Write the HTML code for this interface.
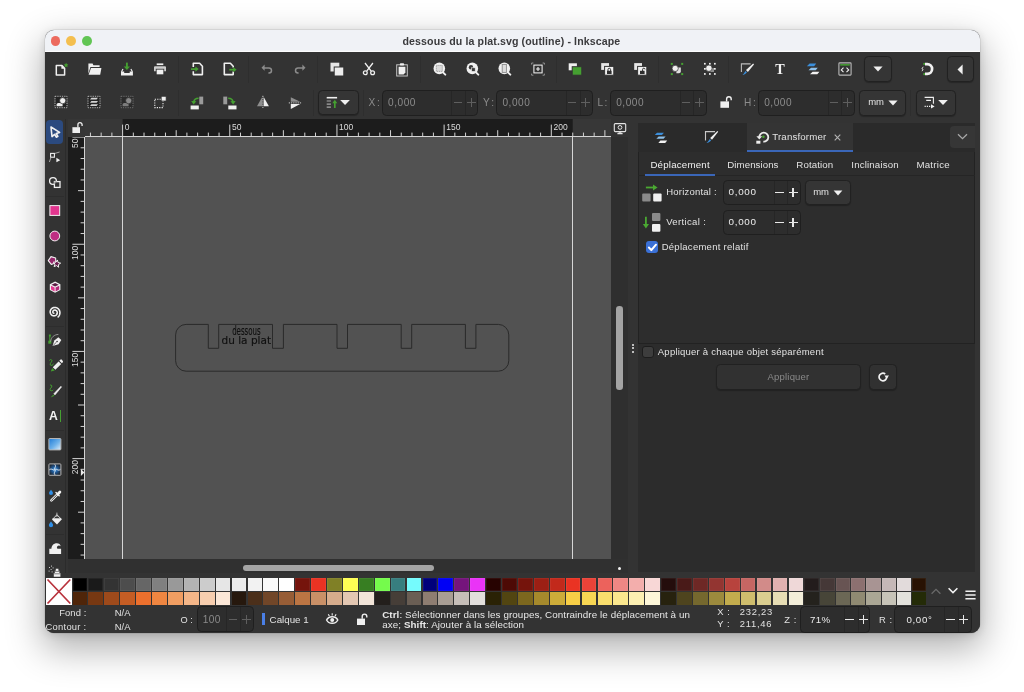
<!DOCTYPE html>
<html lang="fr">
<head>
<meta charset="utf-8">
<title>dessous du la plat.svg (outline) - Inkscape</title>
<style>
html,body{margin:0;padding:0}
body{width:1024px;height:692px;background:#fff;position:relative;overflow:hidden;font-family:"Liberation Sans",sans-serif;color:#e6e6e6}
#win{position:absolute;left:44.5px;top:30px;width:935px;height:603px;border-radius:9px;overflow:hidden;background:#333;
 box-shadow:0 0 0 .5px rgba(0,0,0,.13),0 14px 36px 3px rgba(0,0,0,.30),0 2px 8px rgba(0,0,0,.12)}
#o{position:absolute;left:-44.5px;top:-30px;width:1024px;height:692px;will-change:transform}
#o *{position:absolute;box-sizing:border-box}
#o svg *{position:static}
#o .t b{position:static}
.abs{position:absolute}
#title{left:44px;top:30px;width:936px;height:22.4px;background:#f0f2f6;border-bottom:1px solid #fcfcfd}
#title b{left:-.6px;width:100%;top:4.5px;text-align:center;font-size:10.6px;font-weight:bold;color:#3b3b3d;letter-spacing:.11px}
.dot{width:9.8px;height:9.8px;border-radius:50%;top:6.1px}
.sep{width:1px;background:#2e2e2e}
.btn{background:#353535;border:1px solid #212121;border-radius:4.5px;box-shadow:0 1px 1px rgba(0,0,0,.25)}
.inp{background:#2d2d2d;border:1px solid #1f1f1f;border-radius:4.5px}
.inp u{top:0;bottom:0;width:1px;background:#262626;text-decoration:none}
.lbl{font-size:10.1px;color:#8c8c8c;white-space:nowrap;line-height:12px}
.val{font-size:10.1px;color:#8b8b8b;white-space:nowrap;line-height:12px}
.pm{color:#5c5c5c}
.hl{background:#5f5f5f;height:1.2px}
.vl{background:#5f5f5f;width:1.2px}
.hlw{background:#e8e8e8;height:1.4px}
.vlw{background:#e8e8e8;width:1.4px}
#pal i{display:block}
.t{white-space:nowrap;color:#e2e2e2}
</style>
</head>
<body>
<div id="win"><div id="o">

<!-- title bar -->
<div id="title">
 <span class="dot" style="left:6.6px;background:#ec6a5e"></span>
 <span class="dot" style="left:22.4px;background:#f4bf4f"></span>
 <span class="dot" style="left:38.3px;background:#61c554"></span>
 <b>dessous du la plat.svg (outline) - Inkscape</b>
</div>

<!-- toolbars background -->
<div style="left:44px;top:52.4px;width:936px;height:67px;background:#333"></div>
<div class="sep" style="left:178.1px;top:56px;height:26.5px"></div>
<div class="sep" style="left:247.9px;top:56px;height:26.5px"></div>
<div class="sep" style="left:317.2px;top:56px;height:26.5px"></div>
<div class="sep" style="left:420.3px;top:56px;height:26.5px"></div>
<div class="sep" style="left:555.7px;top:56px;height:26.5px"></div>
<div class="sep" style="left:658.2px;top:56px;height:26.5px"></div>
<div class="sep" style="left:728.1px;top:56px;height:26.5px"></div>
<svg class="abs" style="left:53.0px;top:62.0px" width="16" height="16" viewBox="0 0 16 16"><path d="M3.3 3.6 H9 L11.6 6.2 V12.9 H3.3Z" fill="none" stroke="#f0f0f0" stroke-width="1.5" stroke-linejoin="round"/><path d="M6.2 4.4 V8.9 H10.8" fill="none" stroke="#2a2a2a" stroke-width="0"/><path d="M8.4 3.6 V6.8 H11.6Z" fill="#f0f0f0"/><polygon points="13.10,0.80 13.86,2.15 15.38,2.46 14.34,3.60 14.51,5.14 13.10,4.50 11.69,5.14 11.86,3.60 10.82,2.46 12.34,2.15" fill="#45a031"/></svg>
<svg class="abs" style="left:86.6px;top:61.2px" width="16" height="16" viewBox="0 0 16 16"><path d="M1.4 2.4 H5.6 L6.4 4.3 H12.6 V6 H3.4 L1.4 12.8Z" fill="#f0f0f0"/><path d="M4 7 H14.4 L13.2 13.8 H1.6Z" fill="#f0f0f0"/></svg>
<svg class="abs" style="left:119.3px;top:61.2px" width="16" height="16" viewBox="0 0 16 16"><path d="M7.9 1.6 V6.4" stroke="#45a031" stroke-width="1.9"/><path d="M4.9 5.4 H10.9 L7.9 8.9Z" fill="#45a031"/><path d="M2 10.6 H5.2 V11.9 H10.7 V10.6 H13.9 V14.6 H2Z" fill="#f0f0f0"/><path d="M2.5 10.8 L4 8 M13.4 10.8 L11.9 8" stroke="#f0f0f0" stroke-width="1.1" fill="none"/></svg>
<svg class="abs" style="left:151.9px;top:60.8px" width="16" height="16" viewBox="0 0 16 16"><rect x="4.7" y="2.4" width="6.6" height="1.7" fill="#f0f0f0"/><path d="M3 5.3 H13 A1 1 0 0 1 14 6.3 V10.2 H2 V6.3 A1 1 0 0 1 3 5.3Z" fill="#cdcdcd"/><rect x="4.2" y="8.2" width="7.6" height="5.6" fill="#f0f0f0" stroke="#333" stroke-width=".8"/></svg>
<svg class="abs" style="left:189.2px;top:61.0px" width="16" height="16" viewBox="0 0 16 16"><path d="M4.3 6 V2.3 H10.6 L13.4 5.2 V13.6 H4.3 V10.2" fill="none" stroke="#f0f0f0" stroke-width="1.6" stroke-linejoin="round"/><path d="M2 8.1 H7" stroke="#45a031" stroke-width="1.7"/><path d="M6.4 5.5 L9.7 8.1 L6.4 10.7Z" fill="#45a031"/></svg>
<svg class="abs" style="left:221.6px;top:61.0px" width="16" height="16" viewBox="0 0 16 16"><path d="M11.2 10.6 V13.6 H2.3 V2.3 H8.4 L11.2 5.2 V6.4" fill="none" stroke="#f0f0f0" stroke-width="1.6" stroke-linejoin="round"/><path d="M7.3 8.7 H12" stroke="#45a031" stroke-width="1.7"/><path d="M11.3 6.1 L14.6 8.7 L11.3 11.3Z" fill="#45a031"/></svg>
<svg class="abs" style="left:259.0px;top:60.3px" width="16" height="16" viewBox="0 0 16 16"><path d="M4.6 7.9 H10 A2.5 2.5 0 0 1 12.5 10.4 A2.5 2.5 0 0 1 10 12.9 H9.4" fill="none" stroke="#8c8c8c" stroke-width="1.5"/><path d="M5.6 4.5 L2.5 7.7 L5.6 10.8Z" fill="#8c8c8c"/></svg>
<svg class="abs" style="left:292.1px;top:60.3px" width="16" height="16" viewBox="0 0 16 16"><g transform="translate(16,0) scale(-1,1)"><path d="M4.6 7.9 H10 A2.5 2.5 0 0 1 12.5 10.4 A2.5 2.5 0 0 1 10 12.9 H9.4" fill="none" stroke="#8c8c8c" stroke-width="1.5"/><path d="M5.6 4.5 L2.5 7.7 L5.6 10.8Z" fill="#8c8c8c"/></g></svg>
<svg class="abs" style="left:329.2px;top:61.1px" width="16" height="16" viewBox="0 0 16 16"><rect x="1.5" y="1.7" width="8.8" height="8.8" fill="#e6e6e6"/><rect x="5.2" y="6" width="9.6" height="9" fill="#ededed" stroke="#333" stroke-width="1"/></svg>
<svg class="abs" style="left:361.4px;top:61.0px" width="16" height="16" viewBox="0 0 16 16"><path d="M4 2 L10.2 10.2 M11.9 2 L5.7 10.2" stroke="#f0f0f0" stroke-width="1.3" fill="none"/><circle cx="4.3" cy="11.7" r="1.9" fill="none" stroke="#f0f0f0" stroke-width="1.3"/><circle cx="11.6" cy="11.7" r="1.9" fill="none" stroke="#f0f0f0" stroke-width="1.3"/></svg>
<svg class="abs" style="left:393.5px;top:61.6px" width="16" height="16" viewBox="0 0 16 16"><rect x="2.7" y="2.8" width="10.6" height="11.2" fill="none" stroke="#c4c4c4" stroke-width="1"/><rect x="5.9" y="1.2" width="4.2" height="2.4" rx=".8" fill="#f0f0f0"/><path d="M4.6 4.8 H11.4 V10.6 L9.6 12.4 H4.6Z" fill="#f0f0f0"/></svg>
<svg class="abs" style="left:431.8px;top:60.9px" width="16" height="16" viewBox="0 0 16 16"><path d="M11 11.4 L13.3 13.6" stroke="#f0f0f0" stroke-width="2" stroke-linecap="round"/><circle cx="7.3" cy="7.4" r="5.8" fill="#f0f0f0"/><rect x="4.3" y="4.4" width="6" height="6" fill="#d8d8d8" stroke="#8a8a8a" stroke-width=".8" stroke-dasharray="1.2 .8"/></svg>
<svg class="abs" style="left:464.6px;top:60.9px" width="16" height="16" viewBox="0 0 16 16"><path d="M11 11.4 L13.3 13.6" stroke="#f0f0f0" stroke-width="2" stroke-linecap="round"/><circle cx="7.3" cy="7.4" r="5.8" fill="#f0f0f0"/><circle cx="6" cy="6.2" r="2.2" fill="#3a3a3a"/><rect x="6.6" y="6.8" width="3.6" height="3.6" fill="#3a3a3a" stroke="#f0f0f0" stroke-width=".6"/></svg>
<svg class="abs" style="left:497.1px;top:60.9px" width="16" height="16" viewBox="0 0 16 16"><path d="M11 11.4 L13.3 13.6" stroke="#f0f0f0" stroke-width="2" stroke-linecap="round"/><circle cx="7.3" cy="7.4" r="5.8" fill="#f0f0f0"/><rect x="5.2" y="3.4" width="4.2" height="8" fill="#dcdcdc" stroke="#8a8a8a" stroke-width=".9"/></svg>
<svg class="abs" style="left:529.8px;top:60.7px" width="16" height="16" viewBox="0 0 16 16"><rect x="3.9" y="4.1" width="8.2" height="7.8" fill="none" stroke="#f0f0f0" stroke-width="1.05"/><path d="M8 6.1 V9.9 M6.1 8 H9.9" stroke="#f0f0f0" stroke-width="1.1"/><path d="M1.6 3.6 V2 H3.4 M12.6 2 H14.4 V3.6 M14.4 12.6 V14.2 H12.6 M3.4 14.2 H1.6 V12.6" fill="none" stroke="#9a9a9a" stroke-width=".9"/></svg>
<svg class="abs" style="left:566.5px;top:61.2px" width="16" height="16" viewBox="0 0 16 16"><rect x="1.7" y="2.3" width="8.2" height="7" fill="#f0f0f0"/><rect x="5.2" y="5.7" width="9.6" height="8.5" fill="#45a031" stroke="#333" stroke-width="1"/></svg>
<svg class="abs" style="left:599.1px;top:61.2px" width="16" height="16" viewBox="0 0 16 16"><rect x="2.2" y="2.1" width="7.8" height="6.8" fill="#e6e6e6"/><rect x="5.6" y="5.4" width="9.2" height="8.8" fill="#f0f0f0" stroke="#333" stroke-width="1"/><rect x="8" y="9.8" width="4.6" height="3.2" fill="#2e2e2e"/><path d="M9 10 V8.6 A1.3 1.3 0 0 1 11.6 8.6 V10" fill="none" stroke="#2e2e2e" stroke-width="1"/></svg>
<svg class="abs" style="left:631.9px;top:61.2px" width="16" height="16" viewBox="0 0 16 16"><rect x="2.2" y="2.1" width="7.8" height="6.8" fill="#e6e6e6"/><rect x="5.6" y="5.4" width="9.2" height="8.8" fill="#f0f0f0" stroke="#333" stroke-width="1"/><rect x="8" y="9.8" width="4.6" height="3.2" fill="#2e2e2e"/><path d="M10.6 10 V8.4 A1.2 1.2 0 0 1 13 8.4" fill="none" stroke="#2e2e2e" stroke-width="1"/></svg>
<svg class="abs" style="left:669.4px;top:61.0px" width="16" height="16" viewBox="0 0 16 16"><path d="M7.4 6.6 H11.8 V10.4 A1.8 1.8 0 0 1 10 12.2 H7.4Z" fill="#e0e0e0"/><circle cx="6.2" cy="7.4" r="3.1" fill="#f0f0f0" stroke="#333" stroke-width=".7"/><rect x="1.8" y="1.9" width="2" height="2" fill="#45a031"/><rect x="12.2" y="1.9" width="2" height="2" fill="#45a031"/><rect x="1.8" y="12.1" width="2" height="2" fill="#45a031"/><rect x="12.2" y="12.1" width="2" height="2" fill="#45a031"/></svg>
<svg class="abs" style="left:701.9px;top:61.0px" width="16" height="16" viewBox="0 0 16 16"><path d="M8.4 7 H12 V11 H8.4Z" fill="#8e8e8e"/><circle cx="6.9" cy="7.2" r="3.2" fill="#f0f0f0" stroke="#333" stroke-width=".7"/><rect x="2.0" y="1.9" width="1.7" height="1.7" fill="#f0f0f0"/><rect x="7.0" y="1.9" width="1.7" height="1.7" fill="#f0f0f0"/><rect x="12.0" y="1.9" width="1.7" height="1.7" fill="#f0f0f0"/><rect x="2.0" y="7.0" width="1.7" height="1.7" fill="#f0f0f0"/><rect x="12.0" y="7.0" width="1.7" height="1.7" fill="#f0f0f0"/><rect x="2.0" y="12.1" width="1.7" height="1.7" fill="#f0f0f0"/><rect x="7.0" y="12.1" width="1.7" height="1.7" fill="#f0f0f0"/><rect x="12.0" y="12.1" width="1.7" height="1.7" fill="#f0f0f0"/></svg>
<svg class="abs" style="left:739.0px;top:61.0px" width="16" height="16" viewBox="0 0 16 16"><path d="M2.4 11 V2.9 H11.6" fill="none" stroke="#bdbdbd" stroke-width="1.1"/><path d="M14.2 2.6 L15 3.4 L8.9 10.9 L7 9Z" fill="#f0f0f0"/><path d="M6.6 9.9 L7.9 11.2 C7 12.8 5.4 13.6 3.4 13.9 C4.8 12.9 5.4 11.4 6.6 9.9Z" fill="#3b8fdc"/></svg>
<div class="t" style="left:770px;top:61.3px;width:20px;text-align:center;font-family:'Liberation Serif',serif;font-weight:bold;font-size:14.2px;line-height:16px;color:#f2f2f2">T</div>
<svg class="abs" style="left:804.6px;top:61.4px" width="16" height="16" viewBox="0 0 16 16"><path d="M4.6 2.6 H11.2 L9.1 5.3 H1.9Z" fill="#3b8fdc"/><path d="M6 6.8 H12.8 L10.7 9.2 H3.5Z" fill="#8fc1ea"/><path d="M7.6 10.8 H14.4 L12.3 13.3 H5Z" fill="#f2f2f2"/></svg>
<svg class="abs" style="left:837.3px;top:61.2px" width="16" height="16" viewBox="0 0 16 16"><rect x="1.9" y="1.9" width="12.2" height="12.2" rx=".8" fill="none" stroke="#b8b8b8" stroke-width="1.1"/><rect x="3.2" y="3.1" width="9.6" height="1.5" fill="#45a031"/><path d="M6.5 6.6 L4.3 8.9 L6.5 11.2 M9.5 6.6 L11.7 8.9 L9.5 11.2" fill="none" stroke="#f0f0f0" stroke-width="1.1"/></svg>
<div class="btn" style="left:863.8px;top:55.9px;width:28.2px;height:25.8px"></div>
<svg class="abs" style="left:872.6px;top:66px" width="10" height="6" viewBox="0 0 10 6"><path d="M0.4 0.5 H9.6 L5 5.5Z" fill="#f0f0f0"/></svg>
<svg class="abs" style="left:919.2px;top:61.2px" width="16" height="16" viewBox="0 0 16 16"><path d="M6 3.1 H8.2 A4.9 4.9 0 0 1 8.2 12.9 H6" fill="none" stroke="#f0f0f0" stroke-width="2.7"/><rect x="4.3" y="1.9" width="1.7" height="2" fill="#45a031"/><rect x="4.3" y="12.1" width="1.7" height="2" fill="#45a031"/><path d="M4.2 5.8 L2.9 7.8 L4.1 8.3 L3 10.2" fill="none" stroke="#e8e8e8" stroke-width=".9"/></svg>
<div class="btn" style="left:946.6px;top:55.9px;width:27.8px;height:25.8px"></div>
<svg class="abs" style="left:957.2px;top:63.6px" width="6" height="11" viewBox="0 0 6 11"><path d="M5.6 0.6 V10.4 L0.5 5.5Z" fill="#f0f0f0"/></svg>
<div class="sep" style="left:178.1px;top:89.5px;height:26px"></div>
<div class="sep" style="left:313.4px;top:89.5px;height:26px"></div>
<div class="sep" style="left:363.1px;top:89.5px;height:26px"></div>
<div class="sep" style="left:910.1px;top:89.5px;height:26px"></div>
<svg class="abs" style="left:53.4px;top:94.1px" width="16" height="16" viewBox="0 0 16 16"><rect x="2" y="2.3" width="12" height="11.4" fill="#242424" stroke="#c8c8c8" stroke-width=".85" stroke-dasharray="1.3 1"/><path d="M3.6 12.2 V10.6 A1.6 1.6 0 0 1 5.2 9 H9.6 V12.2Z" fill="#ececec"/><circle cx="9.7" cy="6.7" r="3.1" fill="#f0f0f0" stroke="#242424" stroke-width=".7"/></svg>
<svg class="abs" style="left:86.4px;top:94.1px" width="16" height="16" viewBox="0 0 16 16"><rect x="2" y="2.3" width="12" height="11.4" fill="#242424" stroke="#c8c8c8" stroke-width=".85" stroke-dasharray="1.3 1"/><path d="M5.4 3.8 H12 L10.6 5.6 H4Z M5.4 7 H12 L10.6 8.8 H4Z M5.4 10.2 H12 L10.6 12 H4Z" fill="#d2d2d2"/></svg>
<svg class="abs" style="left:118.8px;top:94.1px" width="16" height="16" viewBox="0 0 16 16"><rect x="2" y="2.3" width="12" height="11.4" fill="#2b2b2b" stroke="#7a7a7a" stroke-width=".85" stroke-dasharray="1.3 1"/><path d="M3.6 12.2 V10.6 A1.6 1.6 0 0 1 5.2 9 H9.6 V12.2Z" fill="#7c7c7c"/><circle cx="9.7" cy="6.7" r="3.1" fill="#8a8a8a" stroke="#2b2b2b" stroke-width=".7"/></svg>
<svg class="abs" style="left:152.0px;top:94.3px" width="16" height="16" viewBox="0 0 16 16"><rect x="2.8" y="5.2" width="8.2" height="8.4" fill="none" stroke="#f0f0f0" stroke-width="1.05" stroke-dasharray="1.2 1.2"/><rect x="9.2" y="2.3" width="4.9" height="4.7" fill="#f0f0f0" stroke="#333" stroke-width=".7"/></svg>
<svg class="abs" style="left:189.3px;top:94.5px" width="16" height="16" viewBox="0 0 16 16"><rect x="10.3" y="1.6" width="3.9" height="7.7" fill="#9a9a9a"/><rect x="1.6" y="10.5" width="8.2" height="3.9" fill="#f0f0f0"/><path d="M9.6 3.2 C6.8 3.2 5 4.6 4.8 7" fill="none" stroke="#45a031" stroke-width="1.6"/><path d="M2.2 5.9 L7.4 6.3 L4.6 9.4Z" fill="#45a031"/></svg>
<svg class="abs" style="left:221.8px;top:94.5px" width="16" height="16" viewBox="0 0 16 16"><rect x="1.3" y="1.6" width="3.9" height="7.7" fill="#9a9a9a"/><rect x="6.3" y="10.5" width="8.2" height="3.9" fill="#f0f0f0"/><path d="M6.2 3.2 C9 3.2 10.8 4.6 11 7" fill="none" stroke="#45a031" stroke-width="1.6"/><path d="M13.6 5.9 L8.4 6.3 L11.2 9.4Z" fill="#45a031"/></svg>
<svg class="abs" style="left:255.0px;top:94.3px" width="16" height="16" viewBox="0 0 16 16"><path d="M7.2 3 V12.2 H2Z" fill="#8e8e8e"/><path d="M8.7 3 V12.2 H13.9Z" fill="#f0f0f0"/><path d="M7.9 1.8 V14" stroke="#e0e0e0" stroke-width=".9" stroke-dasharray="1.3 .9"/></svg>
<svg class="abs" style="left:287.2px;top:94.9px" width="16" height="16" viewBox="0 0 16 16"><path d="M3.8 2.2 L13.2 6.8 H3.8Z" fill="#8e8e8e"/><path d="M3.8 13.9 L13.2 8.9 H3.8Z" fill="#f0f0f0"/><path d="M1.8 7.9 H14.4" stroke="#e0e0e0" stroke-width=".9" stroke-dasharray="1.3 .9"/></svg>
<div class="btn" style="left:318.4px;top:89.6px;width:40.4px;height:25.8px"></div>
<svg class="abs" style="left:325px;top:95px" width="28" height="15" viewBox="325 95 28 15"><path d="M326.7 97.7 H337.1" stroke="#f0f0f0" stroke-width="1.6"/><path d="M326.7 101 H330.9 M326.7 104.1 H330.9 M326.7 107.2 H330.9" stroke="#a8a8a8" stroke-width="1.2"/><path d="M334.8 108 V102.4" stroke="#45a031" stroke-width="1.7"/><path d="M332.3 103.2 L334.8 99.8 L337.3 103.2Z" fill="#45a031"/><path d="M340.2 100 H349.9 L345.05 105Z" fill="#f0f0f0"/></svg>
<div class="lbl" style="left:368.4px;top:97.2px;letter-spacing:-.5px">X :</div><div class="inp" style="left:381.8px;top:89.5px;width:96.7px;height:26px"><u style="left:68.7px"></u><u style="left:82.4px"></u></div><div class="val" style="left:388.0px;top:97.1px;letter-spacing:.55px">0,000</div><div class="hl" style="left:453.5px;top:102px;width:8.6px"></div><div class="hl" style="left:467.0px;top:102px;width:8.8px"></div><div class="vl" style="left:470.9px;top:97.8px;height:9.2px"></div>
<div class="lbl" style="left:483px;top:97.2px;letter-spacing:-.5px">Y :</div><div class="inp" style="left:496.2px;top:89.5px;width:96.7px;height:26px"><u style="left:68.7px"></u><u style="left:82.4px"></u></div><div class="val" style="left:502.4px;top:97.1px;letter-spacing:.55px">0,000</div><div class="hl" style="left:567.9px;top:102px;width:8.6px"></div><div class="hl" style="left:581.4px;top:102px;width:8.8px"></div><div class="vl" style="left:585.3px;top:97.8px;height:9.2px"></div>
<div class="lbl" style="left:597.4px;top:97.2px;letter-spacing:-.5px">L :</div><div class="inp" style="left:610px;top:89.5px;width:96.7px;height:26px"><u style="left:68.7px"></u><u style="left:82.4px"></u></div><div class="val" style="left:616.2px;top:97.1px;letter-spacing:.55px">0,000</div><div class="hl" style="left:681.7px;top:102px;width:8.6px"></div><div class="hl" style="left:695.2px;top:102px;width:8.8px"></div><div class="vl" style="left:699.1px;top:97.8px;height:9.2px"></div>
<div class="lbl" style="left:743.9px;top:97.2px;letter-spacing:-.5px">H :</div><div class="inp" style="left:758px;top:89.5px;width:96.7px;height:26px"><u style="left:68.7px"></u><u style="left:82.4px"></u></div><div class="val" style="left:764.2px;top:97.1px;letter-spacing:.55px">0,000</div><div class="hl" style="left:829.7px;top:102px;width:8.6px"></div><div class="hl" style="left:843.2px;top:102px;width:8.8px"></div><div class="vl" style="left:847.1px;top:97.8px;height:9.2px"></div>
<svg class="abs" style="left:718.3px;top:94.3px" width="16" height="16" viewBox="0 0 16 16"><rect x="2.4" y="7.4" width="8.6" height="6.4" fill="#f0f0f0"/><path d="M8.6 7.6 V5 A2.3 2.3 0 0 1 13.2 5 V6.2" fill="none" stroke="#f0f0f0" stroke-width="1.4"/></svg>
<div class="btn" style="left:859.4px;top:89.5px;width:46.2px;height:26px"></div>
<div class="t" style="left:868.2px;top:96.1px;font-size:9.5px;line-height:12px">mm</div>
<svg class="abs" style="left:887.6px;top:99.8px" width="10" height="6" viewBox="0 0 10 6"><path d="M0.4 0.5 H9.6 L5 5.5Z" fill="#f0f0f0"/></svg>
<div class="btn" style="left:915.6px;top:89.5px;width:40px;height:26px"></div>
<svg class="abs" style="left:921px;top:95px" width="32" height="15" viewBox="921 95 32 15"><path d="M924.6 97.4 H933.4 V103.8 M926.2 100.4 H931" fill="none" stroke="#f0f0f0" stroke-width="1.1"/><path d="M924.6 106.4 H931.6" stroke="#f0f0f0" stroke-width="1.1" stroke-dasharray="1.2 1"/><path d="M931 104.2 L934.6 106.4 L931 108.6Z" fill="#f0f0f0"/><path d="M938.2 100 H947.8 L943 105Z" fill="#f0f0f0"/></svg>

<!-- toolbox -->
<div style="left:44px;top:119px;width:21.5px;height:459px;background:#333"></div>
<div class="sep" style="left:65px;top:119px;height:454px;background:#2b2b2b"></div>
<div style="left:46px;top:195.9px;width:18px;height:1px;background:#2d2d2d"></div>
<div style="left:46px;top:325.5px;width:18px;height:1px;background:#2d2d2d"></div>
<div style="left:46px;top:429.7px;width:18px;height:1px;background:#2d2d2d"></div>
<div style="left:46px;top:534.4px;width:18px;height:1px;background:#2d2d2d"></div>
<div style="left:46.1px;top:119.7px;width:17.3px;height:24px;border-radius:4px;background:#2b4a7f"></div>
<svg class="abs" style="left:44px;top:119px" width="22" height="459" viewBox="44 119 22 459"><path d="M51 127 L59.6 132.4 L56.2 133.5 L57.9 136.3 L56.3 137.2 L54.6 134.4 L52 136.6Z" fill="#2b4a7f" stroke="#f0f0f0" stroke-width="1.6" stroke-linejoin="round"/><rect x="50.6" y="153.4" width="3.8" height="3.8" fill="none" stroke="#f0f0f0" stroke-width="1.1"/><path d="M49.4 162 L50.9 157.6 M55 153.4 L59.6 152" stroke="#c0c0c0" stroke-width=".8" fill="none"/><path d="M56.4 157.8 L60.2 160.2 L56.4 162.2Z" fill="#f0f0f0"/><circle cx="53" cy="181" r="3.4" fill="none" stroke="#f0f0f0" stroke-width="1.3"/><rect x="54.4" y="181.6" width="5.6" height="5.8" fill="#333" stroke="#f0f0f0" stroke-width="1.3"/><path d="M54.4 184.4 L57 181.6 H54.4Z" fill="#8a8a8a"/><rect x="49.9" y="205.6" width="9.8" height="9.8" fill="#e2368f" stroke="#f0f0f0" stroke-width="1"/><circle cx="54.8" cy="236" r="4.9" fill="#bf2d83" stroke="#f0f0f0" stroke-width="1"/><polygon points="50.99,256.65 55.63,257.97 55.80,262.79 51.27,264.44 48.30,260.65" fill="#96286c" stroke="#f0f0f0" stroke-width="1.1" stroke-linejoin="round"/><polygon points="57.38,259.94 58.06,262.52 60.65,263.16 58.41,264.61 58.60,267.26 56.53,265.58 54.06,266.58 55.02,264.09 53.31,262.05 55.97,262.20" fill="#6a1c4e" stroke="#f0f0f0" stroke-width="1" stroke-linejoin="round"/><path d="M55.1 281.59999999999997 L60.4 284.3 V290.09999999999997 L55.1 292.8 L49.800000000000004 290.09999999999997 V284.3Z" fill="#f0f0f0"/><path d="M55.1 283.0 L58.7 284.8 L55.1 286.59999999999997 L51.5 284.8Z" fill="#5a1c44"/><path d="M51.0 285.8 L54.6 287.59999999999997 V291.5 L51.0 289.59999999999997Z" fill="#e2368f"/><path d="M59.2 285.8 L55.6 287.59999999999997 V291.5 L59.2 289.59999999999997Z" fill="#b02878"/><path d="M53.80 313.22 L53.67 313.18 L53.53 313.13 L53.41 313.05 L53.29 312.96 L53.17 312.85 L53.07 312.72 L52.99 312.57 L52.92 312.42 L52.86 312.24 L52.83 312.06 L52.82 311.87 L52.84 311.68 L52.88 311.48 L52.94 311.28 L53.03 311.09 L53.14 310.91 L53.28 310.73 L53.44 310.57 L53.63 310.43 L53.83 310.31 L54.06 310.21 L54.29 310.14 L54.54 310.09 L54.80 310.07 L55.07 310.09 L55.34 310.13 L55.60 310.21 L55.86 310.32 L56.11 310.47 L56.34 310.64 L56.56 310.85 L56.75 311.08 L56.92 311.34 L57.06 311.62 L57.17 311.92 L57.24 312.24 L57.28 312.57 L57.28 312.91 L57.24 313.25 L57.15 313.58 L57.03 313.92 L56.87 314.24 L56.67 314.54 L56.43 314.82 L56.15 315.07 L55.85 315.30 L55.51 315.49 L55.15 315.64 L54.77 315.76 L54.37 315.82 L53.96 315.85 L53.55 315.82 L53.14 315.75 L52.73 315.62 L52.34 315.45 L51.96 315.23 L51.61 314.97 L51.28 314.66 L50.99 314.32 L50.74 313.94 L50.53 313.52 L50.37 313.08 L50.26 312.62 L50.20 312.15 L50.20 311.66 L50.25 311.17 L50.36 310.69 L50.53 310.22 L50.75 309.76 L51.03 309.33 L51.36 308.93 L51.73 308.56 L52.15 308.24 L52.61 307.97 L53.10 307.74 L53.62 307.58 L54.16 307.47 L54.72 307.43 L55.28 307.45 L55.84 307.53 L56.39 307.69 L56.93 307.90 L57.45 308.18 L57.93 308.52 L58.37 308.91 L58.77 309.36 L59.12 309.86 L59.42 310.39 L59.65 310.97 L59.81 311.57 L59.91 312.19 L59.94 312.82 L59.89 313.46 L59.77 314.09 L59.57 314.71 L59.30 315.31 L58.97 315.88 L58.56 316.41 L58.10 316.90" fill="none" stroke="#f0f0f0" stroke-width="1.55" stroke-linecap="round"/><path d="M49.8 335.6 V342" stroke="#45a031" stroke-width="1"/><rect x="48.9" y="334.5" width="2" height="2" fill="#45a031"/><rect x="48.3" y="340.7" width="3" height="3" fill="#45a031"/><path d="M50.6 341.6 C51 337 54.5 334.6 58.4 334.4" fill="none" stroke="#a8a8a8" stroke-width=".8"/><path d="M52.6 346 L54.3 340.4 L58.4 337.3 L61.3 340 L58.6 344.2Z" fill="#f0f0f0"/><path d="M53.2 345.4 L56.6 342" stroke="#333" stroke-width=".7"/><circle cx="57.1" cy="341.5" r=".8" fill="#333"/><path d="M49.4 360.4 C50.4 359 52.4 359.6 51.8 361.2 C51 363 49.6 363.6 50.4 365 C51.2 366 53 365.2 53.6 363.6" fill="none" stroke="#45a031" stroke-width="1"/><path d="M52.8 367.2 L58.6 361.4 L61.2 364 L55.4 369.8Z" fill="#f0f0f0"/><path d="M59.3 360.7 L60.3 359.7 A1.2 1.2 0 0 1 62 359.9 L62.8 360.9 A1.2 1.2 0 0 1 62.8 362.3 L61.9 363.3Z" fill="#f0f0f0"/><path d="M52.2 367.9 L54.7 370.4 L50.8 371.6Z" fill="#45a031"/><path d="M50 385.2 C51.2 384.6 52.4 385.6 51.6 387 C50.8 388.4 49.4 389.2 50.4 390.4 C51.2 391.2 52.6 390.8 53.2 389.8" fill="none" stroke="#45a031" stroke-width="1"/><path d="M53.8 393.8 L60.9 386.2 L61.6 386.9 L55 394.9Z" fill="#f0f0f0" stroke="#f0f0f0" stroke-width=".5"/><path d="M53.3 394.4 L54.6 395.7 L50.6 397.4Z" fill="#45a031"/><defs><linearGradient id="gr" x1="0" y1="0" x2="1" y2="1"><stop offset="0" stop-color="#1d7ad6"/><stop offset=".55" stop-color="#6fb2ea"/><stop offset="1" stop-color="#e4f0fa"/></linearGradient><radialGradient id="ms" cx=".5" cy=".5" r=".55"><stop offset="0" stop-color="#3f9cf0"/><stop offset=".55" stop-color="#1d4f86"/><stop offset="1" stop-color="#20262e"/></radialGradient></defs><rect x="48.9" y="438.5" width="12" height="11.4" rx=".8" fill="url(#gr)" stroke="#b4b4b4" stroke-width="1"/><rect x="48.9" y="463.9" width="12" height="11.4" rx=".8" fill="url(#ms)" stroke="#b4b4b4" stroke-width="1"/><path d="M49.4 469.8 C52 467.6 53.6 471.4 54.9 469.6 C56.2 467.8 58 471.6 60.4 469.4 M54.8 464.4 C57 467 53.2 468.4 54.9 469.6 C56.6 470.8 52.8 472.6 55 474.8" fill="none" stroke="#f4f4f4" stroke-width=".9"/><path d="M51 489.7 C52 491.1 53 492.1 53 493.1 A2 2 0 0 1 49 493.1 C49 492.1 50 491.1 51 489.7Z" fill="#2f8ee6"/><path d="M51.4 500.4 L57.2 494.6" stroke="#f0f0f0" stroke-width="2.6" stroke-linecap="round"/><path d="M51.6 500.2 L56.6 495.2" stroke="#333" stroke-width=".9" stroke-linecap="round"/><path d="M56 492.6 L59.2 495.8" stroke="#f0f0f0" stroke-width="1.4" stroke-linecap="round"/><path d="M58 494 L59.9 492.1" stroke="#f0f0f0" stroke-width="2.8" stroke-linecap="round"/><path d="M51 521.5699999999999 C52.05 523.04 53.1 524.0899999999999 53.1 525.14 A2.1 2.1 0 0 1 48.9 525.14 C48.9 524.0899999999999 49.95 523.04 51 521.5699999999999Z" fill="#2f8ee6"/><path d="M56.9 514.2 L61.9 519.2 L57 524.4 L52 519.4Z" fill="#f0f0f0"/><path d="M53.2 518.9 L56.9 515.3 L60.6 518.9Z" fill="#333"/><path d="M52.6 518.7 H61.2" stroke="#f0f0f0" stroke-width=".9"/><path d="M56.9 512.6 V517" stroke="#cfcfcf" stroke-width=".8"/><path d="M49.3 553.9 V548.8 H51.4 C51.6 545.4 53.8 543.3 56.8 543.3 C59 543.3 60.4 544.6 60.6 546.2 C59.6 545.4 58.2 545.4 57.4 546.2 C56.6 547.1 56.8 548.4 57.8 548.8 H61.1 V553.9Z" fill="#f0f0f0"/><path d="M53.8 576.8 V573 H54.8 V570.8 H55.8 V568.8 H58.4 V570.8 H59.4 V573 H60.4 V576.8Z" fill="#f0f0f0"/><path d="M53.8 573.8 H60.4 M54.8 571.4 H59.4" stroke="#333" stroke-width=".6"/><g fill="#cfcfcf"><rect x="49" y="567" width="1" height="1"/><rect x="51" y="565.6" width="1" height="1"/><rect x="50.6" y="569" width="1" height="1"/><rect x="48.6" y="570.6" width="1" height="1"/><rect x="51.6" y="571.4" width="1" height="1"/><rect x="52.6" y="567.4" width="1" height="1"/></g></svg>
<div class="t" style="left:47.4px;top:409.2px;width:12px;text-align:center;font-weight:bold;font-size:12.2px;line-height:14px;color:#f2f2f2">A</div>
<div style="left:59.8px;top:409.7px;width:1.4px;height:12.8px;background:#45a031"></div>

<!-- ruler corner -->
<div style="left:68px;top:119px;width:17px;height:18px;background:#363636"></div>
<svg class="abs" style="left:69px;top:119px" width="16" height="18" viewBox="69 119 16 18"><rect x="72.4" y="127.2" width="7.6" height="5.8" fill="#f0f0f0"/><path d="M77.9 127.4 V124.8 A2.1 2.1 0 0 1 82.1 124.8 V126" fill="none" stroke="#f0f0f0" stroke-width="1.3"/></svg>
<!-- canvas -->
<div style="left:85px;top:137px;width:526px;height:422px;background:#525252"></div>
<div style="left:122.1px;top:137px;width:1px;height:422px;background:#d6d6d6"></div>
<div style="left:572.2px;top:137px;width:1px;height:422px;background:#d6d6d6"></div>
<svg class="abs" style="left:85px;top:119px" width="526" height="18" viewBox="85 119 526 18">
<rect x="85" y="119" width="526" height="18" fill="#373737"/>
<rect x="122.6" y="119" width="450.1" height="18" fill="#1c1c1c"/>
<g stroke="#d4d4d4" stroke-width="1">
<line x1="90.45" y1="132.6" x2="90.45" y2="137"/>
<line x1="101.16" y1="132.6" x2="101.16" y2="137"/>
<line x1="111.88" y1="132.6" x2="111.88" y2="137"/>
<line x1="122.60" y1="124.6" x2="122.60" y2="137"/>
<line x1="133.32" y1="132.6" x2="133.32" y2="137"/>
<line x1="144.03" y1="132.6" x2="144.03" y2="137"/>
<line x1="154.75" y1="132.6" x2="154.75" y2="137"/>
<line x1="165.47" y1="132.6" x2="165.47" y2="137"/>
<line x1="176.19" y1="130.2" x2="176.19" y2="137"/>
<line x1="186.90" y1="132.6" x2="186.90" y2="137"/>
<line x1="197.62" y1="132.6" x2="197.62" y2="137"/>
<line x1="208.34" y1="132.6" x2="208.34" y2="137"/>
<line x1="219.06" y1="132.6" x2="219.06" y2="137"/>
<line x1="229.77" y1="124.6" x2="229.77" y2="137"/>
<line x1="240.49" y1="132.6" x2="240.49" y2="137"/>
<line x1="251.21" y1="132.6" x2="251.21" y2="137"/>
<line x1="261.93" y1="132.6" x2="261.93" y2="137"/>
<line x1="272.64" y1="132.6" x2="272.64" y2="137"/>
<line x1="283.36" y1="130.2" x2="283.36" y2="137"/>
<line x1="294.08" y1="132.6" x2="294.08" y2="137"/>
<line x1="304.80" y1="132.6" x2="304.80" y2="137"/>
<line x1="315.51" y1="132.6" x2="315.51" y2="137"/>
<line x1="326.23" y1="132.6" x2="326.23" y2="137"/>
<line x1="336.95" y1="124.6" x2="336.95" y2="137"/>
<line x1="347.67" y1="132.6" x2="347.67" y2="137"/>
<line x1="358.38" y1="132.6" x2="358.38" y2="137"/>
<line x1="369.10" y1="132.6" x2="369.10" y2="137"/>
<line x1="379.82" y1="132.6" x2="379.82" y2="137"/>
<line x1="390.54" y1="130.2" x2="390.54" y2="137"/>
<line x1="401.25" y1="132.6" x2="401.25" y2="137"/>
<line x1="411.97" y1="132.6" x2="411.97" y2="137"/>
<line x1="422.69" y1="132.6" x2="422.69" y2="137"/>
<line x1="433.41" y1="132.6" x2="433.41" y2="137"/>
<line x1="444.12" y1="124.6" x2="444.12" y2="137"/>
<line x1="454.84" y1="132.6" x2="454.84" y2="137"/>
<line x1="465.56" y1="132.6" x2="465.56" y2="137"/>
<line x1="476.28" y1="132.6" x2="476.28" y2="137"/>
<line x1="487.00" y1="132.6" x2="487.00" y2="137"/>
<line x1="497.71" y1="130.2" x2="497.71" y2="137"/>
<line x1="508.43" y1="132.6" x2="508.43" y2="137"/>
<line x1="519.15" y1="132.6" x2="519.15" y2="137"/>
<line x1="529.87" y1="132.6" x2="529.87" y2="137"/>
<line x1="540.58" y1="132.6" x2="540.58" y2="137"/>
<line x1="551.30" y1="124.6" x2="551.30" y2="137"/>
<line x1="562.02" y1="132.6" x2="562.02" y2="137"/>
<line x1="572.74" y1="132.6" x2="572.74" y2="137"/>
<line x1="583.45" y1="132.6" x2="583.45" y2="137"/>
<line x1="594.17" y1="132.6" x2="594.17" y2="137"/>
<line x1="604.89" y1="130.2" x2="604.89" y2="137"/>
<line x1="85" y1="136.5" x2="611" y2="136.5"/>
</g>
<g fill="#dcdcdc" font-family="Liberation Sans, sans-serif" font-size="8.5">
<text x="124.8" y="130.2">0</text>
<text x="232.0" y="130.2">50</text>
<text x="339.1" y="130.2">100</text>
<text x="446.3" y="130.2">150</text>
<text x="553.5" y="130.2">200</text>
</g></svg>
<svg class="abs" style="left:68px;top:137px" width="17" height="422" viewBox="68 137 17 422">
<rect x="68" y="137" width="17" height="422" fill="#1c1c1c"/>
<g stroke="#d4d4d4" stroke-width="1">
<line x1="72.4" y1="137.07" x2="85" y2="137.07"/>
<line x1="80.6" y1="147.79" x2="85" y2="147.79"/>
<line x1="80.6" y1="158.51" x2="85" y2="158.51"/>
<line x1="80.6" y1="169.23" x2="85" y2="169.23"/>
<line x1="80.6" y1="179.94" x2="85" y2="179.94"/>
<line x1="78" y1="190.66" x2="85" y2="190.66"/>
<line x1="80.6" y1="201.38" x2="85" y2="201.38"/>
<line x1="80.6" y1="212.10" x2="85" y2="212.10"/>
<line x1="80.6" y1="222.81" x2="85" y2="222.81"/>
<line x1="80.6" y1="233.53" x2="85" y2="233.53"/>
<line x1="72.4" y1="244.25" x2="85" y2="244.25"/>
<line x1="80.6" y1="254.97" x2="85" y2="254.97"/>
<line x1="80.6" y1="265.69" x2="85" y2="265.69"/>
<line x1="80.6" y1="276.40" x2="85" y2="276.40"/>
<line x1="80.6" y1="287.12" x2="85" y2="287.12"/>
<line x1="78" y1="297.84" x2="85" y2="297.84"/>
<line x1="80.6" y1="308.55" x2="85" y2="308.55"/>
<line x1="80.6" y1="319.27" x2="85" y2="319.27"/>
<line x1="80.6" y1="329.99" x2="85" y2="329.99"/>
<line x1="80.6" y1="340.71" x2="85" y2="340.71"/>
<line x1="72.4" y1="351.42" x2="85" y2="351.42"/>
<line x1="80.6" y1="362.14" x2="85" y2="362.14"/>
<line x1="80.6" y1="372.86" x2="85" y2="372.86"/>
<line x1="80.6" y1="383.58" x2="85" y2="383.58"/>
<line x1="80.6" y1="394.29" x2="85" y2="394.29"/>
<line x1="78" y1="405.01" x2="85" y2="405.01"/>
<line x1="80.6" y1="415.73" x2="85" y2="415.73"/>
<line x1="80.6" y1="426.45" x2="85" y2="426.45"/>
<line x1="80.6" y1="437.16" x2="85" y2="437.16"/>
<line x1="80.6" y1="447.88" x2="85" y2="447.88"/>
<line x1="72.4" y1="458.60" x2="85" y2="458.60"/>
<line x1="80.6" y1="469.32" x2="85" y2="469.32"/>
<line x1="80.6" y1="480.03" x2="85" y2="480.03"/>
<line x1="80.6" y1="490.75" x2="85" y2="490.75"/>
<line x1="80.6" y1="501.47" x2="85" y2="501.47"/>
<line x1="78" y1="512.19" x2="85" y2="512.19"/>
<line x1="80.6" y1="522.90" x2="85" y2="522.90"/>
<line x1="80.6" y1="533.62" x2="85" y2="533.62"/>
<line x1="80.6" y1="544.34" x2="85" y2="544.34"/>
<line x1="80.6" y1="555.06" x2="85" y2="555.06"/>
<line x1="84.5" y1="137" x2="84.5" y2="559"/>
</g>
<g fill="#dcdcdc" font-family="Liberation Sans, sans-serif" font-size="8.5">
<text transform="translate(78.4,138.5) rotate(-90)" text-anchor="end">50</text>
<text transform="translate(78.4,245.7) rotate(-90)" text-anchor="end">100</text>
<text transform="translate(78.4,352.8) rotate(-90)" text-anchor="end">150</text>
<text transform="translate(78.4,460.0) rotate(-90)" text-anchor="end">200</text>
</g>
<path d="M80.9 468.9 L84.4 472.5 L80.9 476.1 Z" fill="#e8e8e8"/>
</svg>
<svg class="abs" style="left:85px;top:137px" width="526" height="422" viewBox="85 137 526 422"><path d="M186.1 324.4 H208.3 V348.3 H218.7 V324.4 H272.5 V348.3 H283.4 V324.4 H337.0 V348.3 H347.5 V324.4 H401.2 V348.3 H411.7 V324.4 H465.4 V348.3 H475.9 V324.4 H498.3 A10.5 10.5 0 0 1 508.8 334.9 V360.7 A10.5 10.5 0 0 1 498.3 371.2 H186.1 A10.5 10.5 0 0 1 175.6 360.7 V334.9 A10.5 10.5 0 0 1 186.1 324.4 Z" fill="none" stroke="#2a2a2a" stroke-width="1"/><g fill="#101010" stroke="#101010" stroke-width=".15" font-family="DejaVu Sans, Liberation Sans, sans-serif"><text transform="translate(246.4,334.5) scale(0.567,1)" font-size="12.4" text-anchor="middle">dessous</text><text x="246.3" y="343.6" font-size="10.5" text-anchor="middle">du la plat</text></g></svg>

<!-- scroll areas -->
<div style="left:611px;top:137px;width:17px;height:436px;background:#2f2f2f"></div>
<div style="left:68px;top:559px;width:560px;height:14px;background:#303030"></div>
<div style="left:243.4px;top:564.6px;width:191px;height:6.4px;border-radius:3.2px;background:#a4a4a4"></div>
<div style="left:616px;top:305.7px;width:6.6px;height:84px;border-radius:3.3px;background:#a4a4a4"></div>
<div style="left:617.6px;top:566.5px;width:3px;height:3px;border-radius:50%;background:#f4f4f4"></div>

<!-- dock -->
<div style="left:628px;top:119px;width:352px;height:454px;background:#333"></div>
<div style="left:638px;top:123px;width:337px;height:449px;background:#2c2c2c"></div>
<!-- handle dots -->
<div style="left:631.6px;top:343.6px;width:2.2px;height:2.2px;border-radius:50%;background:#ededed"></div>
<div style="left:631.6px;top:347.2px;width:2.2px;height:2.2px;border-radius:50%;background:#ededed"></div>
<div style="left:631.6px;top:350.8px;width:2.2px;height:2.2px;border-radius:50%;background:#ededed"></div>
<!-- CMS icon -->
<svg class="abs" style="left:612.5px;top:121.5px" width="14" height="14" viewBox="0 0 14 14"><rect x="1.3" y="1.6" width="11.4" height="8" rx="1" fill="none" stroke="#e4e4e4" stroke-width="1.1"/><circle cx="7" cy="5.4" r="1.9" fill="none" stroke="#e4e4e4" stroke-width="1"/><path d="M4.4 11.6 h5.2 M5.6 10.2 h2.8" stroke="#e4e4e4" stroke-width="1.1"/></svg>

<!-- dock tab header -->
<div style="left:638px;top:123px;width:337px;height:29.4px;background:#2a2a2a"></div>
<div style="left:746.5px;top:123px;width:106.5px;height:29.4px;background:#343434"></div>
<div style="left:746.5px;top:149.7px;width:106.5px;height:2.7px;background:#3a66b8"></div>
<div style="left:949.5px;top:125.5px;width:25.5px;height:22px;background:#363636;border-radius:4px 0 0 4px"></div>
<svg class="abs" style="left:956px;top:132px" width="13" height="9" viewBox="0 0 13 9"><path d="M2 2.2 L6.5 6.6 L11 2.2" fill="none" stroke="#a8a8a8" stroke-width="1.3"/></svg>
<!-- layers tab icon -->
<svg class="abs" style="left:652px;top:130px" width="17" height="15" viewBox="652 130 17 15"><path d="M657 132.7 H663.9 L661.9 135.1 H654.8Z" fill="#3b8fdc"/><path d="M658.6 136.5 H665.6 L663.6 138.7 H656.4Z" fill="#8fc1ea"/><path d="M660.4 140.5 H667.2 L665.2 142.9 H658.4Z" fill="#f2f2f2"/></svg>
<!-- fill & stroke tab icon -->
<svg class="abs" style="left:703px;top:129px" width="17" height="16" viewBox="703 129 17 16"><path d="M705.5 140.4 V131.6 H715" fill="none" stroke="#c8c8c8" stroke-width="1.1"/><path d="M717.4 131 L718.2 131.8 L712 139.8 L710.2 138Z" fill="#f0f0f0"/><path d="M709.8 138.9 L711.1 140.2 C710.2 141.8 708.6 142.6 706.4 143 C707.9 142 708.6 140.4 709.8 138.9Z" fill="#3b8fdc"/></svg>
<!-- transform tab icon -->
<svg class="abs" style="left:754px;top:130px" width="16" height="16" viewBox="754 130 16 16"><path d="M759.3 137.4 A4.5 4.5 0 1 1 763.3 141.6" fill="none" stroke="#ececec" stroke-width="1.8"/><path d="M756.4 136.2 L762.2 136.2 L759.3 139.6Z" fill="#ececec"/><rect x="756" y="140.3" width="4.8" height="3.7" fill="#ececec" stroke="#343434" stroke-width=".6"/><circle cx="763.4" cy="136.8" r="1.25" fill="#4aa832"/></svg>
<div class="t" style="left:772.3px;top:131px;font-size:9.7px;line-height:12px;letter-spacing:0.145px">Transformer</div>
<svg class="abs" style="left:832.5px;top:133px" width="9" height="9" viewBox="0 0 9 9"><path d="M1.7 1.7 L7.3 7.3 M7.3 1.7 L1.7 7.3" stroke="#b4b4b4" stroke-width="1.1"/></svg>

<!-- inner notebook -->
<div style="left:638px;top:152.3px;width:337px;height:191.5px;background:#2d2d2d;border:1px solid #222;border-top:none"></div>
<div style="left:638px;top:175.2px;width:337px;height:1px;background:#252525"></div>
<div style="left:645px;top:173.6px;width:70px;height:2.5px;background:#3a66b8"></div>
<div class="t" style="left:650.4px;top:159px;font-size:9.7px;line-height:12px;color:#f0f0f0;letter-spacing:0.21px">Déplacement</div>
<div class="t" style="left:727.3px;top:159px;font-size:9.7px;line-height:12px;letter-spacing:0.06px">Dimensions</div>
<div class="t" style="left:796.3px;top:159px;font-size:9.7px;line-height:12px;letter-spacing:0.125px">Rotation</div>
<div class="t" style="left:851.3px;top:159px;font-size:9.7px;line-height:12px;letter-spacing:0.16px">Inclinaison</div>
<div class="t" style="left:916.4px;top:159px;font-size:9.7px;line-height:12px;letter-spacing:0.26px">Matrice</div>

<!-- Horizontal row -->
<svg class="abs" style="left:641px;top:182px" width="22" height="21" viewBox="641 182 22 21"><path d="M645.9 187.5 H654" stroke="#4aa832" stroke-width="1.8"/><path d="M653 184.4 L657.6 187.5 L653 190.6Z" fill="#4aa832"/><rect x="642.2" y="193.4" width="8.4" height="8.1" rx="1" fill="#8a8a8a"/><rect x="653.2" y="193.4" width="8.4" height="8.1" rx="1" fill="#f0f0f0"/></svg>
<div class="t" style="left:666.2px;top:186.3px;font-size:9.5px;line-height:12px;letter-spacing:0.225px">Horizontal :</div>
<div class="inp" style="left:723px;top:179.6px;width:77.5px;height:25.6px"><u style="left:49.5px"></u><u style="left:63px"></u></div>
<div class="t" style="left:728.6px;top:186.2px;font-size:9.9px;line-height:12px;color:#ededed;letter-spacing:.68px">0,000</div>
<div class="hlw" style="left:775.3px;top:191.7px;width:8.6px"></div>
<div class="hlw" style="left:788.6px;top:191.7px;width:9px"></div><div class="vlw" style="left:792.4px;top:187.8px;height:9.2px"></div>
<div class="btn" style="left:804.5px;top:179.6px;width:46px;height:25.6px"></div>
<div class="t" style="left:813.2px;top:186.2px;font-size:9.5px;line-height:12px">mm</div>
<svg class="abs" style="left:832.5px;top:189.6px" width="10" height="6" viewBox="0 0 10 6"><path d="M0.6 0.6 H9.4 L5 5.4Z" fill="#f0f0f0"/></svg>

<!-- Vertical row -->
<svg class="abs" style="left:641px;top:211px" width="22" height="23" viewBox="641 211 22 23"><path d="M645.9 216.7 V225" stroke="#4aa832" stroke-width="1.8"/><path d="M642.8 224 L645.9 228.4 L649 224Z" fill="#4aa832"/><rect x="652" y="213" width="8.4" height="7.9" rx="1" fill="#8a8a8a"/><rect x="652" y="223.9" width="8.4" height="7.9" rx="1" fill="#f0f0f0"/></svg>
<div class="t" style="left:666.2px;top:216.4px;font-size:9.5px;line-height:12px;letter-spacing:0.35px">Vertical :</div>
<div class="inp" style="left:723px;top:209.8px;width:77.5px;height:25.6px"><u style="left:49.5px"></u><u style="left:63px"></u></div>
<div class="t" style="left:728.6px;top:216.4px;font-size:9.9px;line-height:12px;color:#ededed;letter-spacing:.68px">0,000</div>
<div class="hlw" style="left:775.3px;top:221.9px;width:8.6px"></div>
<div class="hlw" style="left:788.6px;top:221.9px;width:9px"></div><div class="vlw" style="left:792.4px;top:218px;height:9.2px"></div>

<!-- relative move checkbox -->
<div style="left:645.5px;top:240.7px;width:12.8px;height:12.7px;border-radius:3px;background:#3a70d6"></div>
<svg class="abs" style="left:645.5px;top:240.7px" width="12.8" height="12.7" viewBox="0 0 12 12"><path d="M2.7 6.2 L5 8.6 L9.4 3.5" fill="none" stroke="#fff" stroke-width="1.9" stroke-linecap="round" stroke-linejoin="round"/></svg>
<div class="t" style="left:661.7px;top:241px;font-size:9.5px;line-height:12px;letter-spacing:0.27px">Déplacement relatif</div>

<!-- apply to each -->
<div style="left:641.6px;top:345.7px;width:12.4px;height:12.4px;border-radius:3px;background:#3d3d3d;border:1px solid #1d1d1d"></div>
<div class="t" style="left:657.8px;top:346px;font-size:9.5px;line-height:12px;letter-spacing:0.23px">Appliquer à chaque objet séparément</div>
<div class="btn" style="left:716px;top:363.5px;width:145px;height:26px;background:#313131"></div>
<div class="t" style="left:716px;top:371.1px;width:145px;text-align:center;font-size:9.5px;line-height:12px;color:#8a8a8a;letter-spacing:0.19px">Appliquer</div>
<div class="btn" style="left:868.6px;top:363.5px;width:28px;height:26px;background:#313131"></div>
<svg class="abs" style="left:876.6px;top:370.5px" width="12" height="12" viewBox="0 0 12 12"><path d="M9.7 6 A3.8 3.8 0 1 1 8.2 3" fill="none" stroke="#f2f2f2" stroke-width="1.7"/><path d="M7.4 4.6 L12 4.6 L9.7 7.8Z" fill="#f2f2f2"/></svg>


<!-- palette -->
<div style="left:66px;top:573px;width:914px;height:33px;background:#333"></div>
<div id="pal">
<div style="left:46px;top:577.8px;width:25.8px;height:27px;background:#fff"></div>
<svg class="abs" style="left:46px;top:577.8px" width="25.8" height="27" viewBox="0 0 25.8 27"><path d="M1.5 1.5 L24.3 25.5 M24.3 1.5 L1.5 25.5" stroke="#b8323c" stroke-width="1.7" fill="none"/></svg>
<i style="left:72.5px;top:577.8px;width:14.8px;height:13.2px;background:#000000;box-shadow:inset 0 0 0 .8px rgba(255,255,255,.07)"></i>
<i style="left:72.5px;top:591.8px;width:14.8px;height:13px;background:#4f2509"></i>
<i style="left:88.4px;top:577.8px;width:14.8px;height:13.2px;background:#1a1a1a;box-shadow:inset 0 0 0 .8px rgba(255,255,255,.07)"></i>
<i style="left:88.4px;top:591.8px;width:14.8px;height:13px;background:#773812"></i>
<i style="left:104.3px;top:577.8px;width:14.8px;height:13.2px;background:#333333;box-shadow:inset 0 0 0 .8px rgba(255,255,255,.07)"></i>
<i style="left:104.3px;top:591.8px;width:14.8px;height:13px;background:#9e4a1b"></i>
<i style="left:120.2px;top:577.8px;width:14.8px;height:13.2px;background:#4d4d4d;box-shadow:inset 0 0 0 .8px rgba(255,255,255,.07)"></i>
<i style="left:120.2px;top:591.8px;width:14.8px;height:13px;background:#c55d24"></i>
<i style="left:136.1px;top:577.8px;width:14.8px;height:13.2px;background:#666666;box-shadow:inset 0 0 0 .8px rgba(255,255,255,.07)"></i>
<i style="left:136.1px;top:591.8px;width:14.8px;height:13px;background:#ed702d"></i>
<i style="left:152.1px;top:577.8px;width:14.8px;height:13.2px;background:#808080;box-shadow:inset 0 0 0 .8px rgba(255,255,255,.07)"></i>
<i style="left:152.1px;top:591.8px;width:14.8px;height:13px;background:#ef8641"></i>
<i style="left:168.0px;top:577.8px;width:14.8px;height:13.2px;background:#999999;box-shadow:inset 0 0 0 .8px rgba(255,255,255,.07)"></i>
<i style="left:168.0px;top:591.8px;width:14.8px;height:13px;background:#f19e62"></i>
<i style="left:183.9px;top:577.8px;width:14.8px;height:13.2px;background:#b3b3b3;box-shadow:inset 0 0 0 .8px rgba(255,255,255,.07)"></i>
<i style="left:183.9px;top:591.8px;width:14.8px;height:13px;background:#f4b688"></i>
<i style="left:199.8px;top:577.8px;width:14.8px;height:13.2px;background:#cccccc;box-shadow:inset 0 0 0 .8px rgba(255,255,255,.07)"></i>
<i style="left:199.8px;top:591.8px;width:14.8px;height:13px;background:#f7ceaf"></i>
<i style="left:215.7px;top:577.8px;width:14.8px;height:13.2px;background:#e6e6e6;box-shadow:inset 0 0 0 .8px rgba(255,255,255,.07)"></i>
<i style="left:215.7px;top:591.8px;width:14.8px;height:13px;background:#fbe7d7"></i>
<i style="left:231.6px;top:577.8px;width:14.8px;height:13.2px;background:#ececec;box-shadow:inset 0 0 0 .8px rgba(255,255,255,.07)"></i>
<i style="left:231.6px;top:591.8px;width:14.8px;height:13px;background:#26180d"></i>
<i style="left:247.5px;top:577.8px;width:14.8px;height:13.2px;background:#f2f2f2;box-shadow:inset 0 0 0 .8px rgba(255,255,255,.07)"></i>
<i style="left:247.5px;top:591.8px;width:14.8px;height:13px;background:#4b2f1a"></i>
<i style="left:263.4px;top:577.8px;width:14.8px;height:13.2px;background:#f9f9f9;box-shadow:inset 0 0 0 .8px rgba(255,255,255,.07)"></i>
<i style="left:263.4px;top:591.8px;width:14.8px;height:13px;background:#714628"></i>
<i style="left:279.3px;top:577.8px;width:14.8px;height:13.2px;background:#ffffff;box-shadow:inset 0 0 0 .8px rgba(255,255,255,.07)"></i>
<i style="left:279.3px;top:591.8px;width:14.8px;height:13px;background:#975d36"></i>
<i style="left:295.2px;top:577.8px;width:14.8px;height:13.2px;background:#75140c;box-shadow:inset 0 0 0 .8px rgba(255,255,255,.07)"></i>
<i style="left:295.2px;top:591.8px;width:14.8px;height:13px;background:#bc7543"></i>
<i style="left:311.1px;top:577.8px;width:14.8px;height:13.2px;background:#ea3323;box-shadow:inset 0 0 0 .8px rgba(255,255,255,.07)"></i>
<i style="left:311.1px;top:591.8px;width:14.8px;height:13px;background:#c99067"></i>
<i style="left:327.1px;top:577.8px;width:14.8px;height:13.2px;background:#808026;box-shadow:inset 0 0 0 .8px rgba(255,255,255,.07)"></i>
<i style="left:327.1px;top:591.8px;width:14.8px;height:13px;background:#d6ac8c"></i>
<i style="left:343.0px;top:577.8px;width:14.8px;height:13.2px;background:#ffff54;box-shadow:inset 0 0 0 .8px rgba(255,255,255,.07)"></i>
<i style="left:343.0px;top:591.8px;width:14.8px;height:13px;background:#e3c7b2"></i>
<i style="left:358.9px;top:577.8px;width:14.8px;height:13.2px;background:#377e22;box-shadow:inset 0 0 0 .8px rgba(255,255,255,.07)"></i>
<i style="left:358.9px;top:591.8px;width:14.8px;height:13px;background:#f1e4d8"></i>
<i style="left:374.8px;top:577.8px;width:14.8px;height:13.2px;background:#75fb4c;box-shadow:inset 0 0 0 .8px rgba(255,255,255,.07)"></i>
<i style="left:374.8px;top:591.8px;width:14.8px;height:13px;background:#231f1c"></i>
<i style="left:390.7px;top:577.8px;width:14.8px;height:13.2px;background:#377e7f;box-shadow:inset 0 0 0 .8px rgba(255,255,255,.07)"></i>
<i style="left:390.7px;top:591.8px;width:14.8px;height:13px;background:#463e38"></i>
<i style="left:406.6px;top:577.8px;width:14.8px;height:13.2px;background:#75fbfd;box-shadow:inset 0 0 0 .8px rgba(255,255,255,.07)"></i>
<i style="left:406.6px;top:591.8px;width:14.8px;height:13px;background:#6a5e54"></i>
<i style="left:422.5px;top:577.8px;width:14.8px;height:13.2px;background:#00007b;box-shadow:inset 0 0 0 .8px rgba(255,255,255,.07)"></i>
<i style="left:422.5px;top:591.8px;width:14.8px;height:13px;background:#8e7d71"></i>
<i style="left:438.4px;top:577.8px;width:14.8px;height:13.2px;background:#0000f5;box-shadow:inset 0 0 0 .8px rgba(255,255,255,.07)"></i>
<i style="left:438.4px;top:591.8px;width:14.8px;height:13px;background:#a99e94"></i>
<i style="left:454.3px;top:577.8px;width:14.8px;height:13.2px;background:#75147c;box-shadow:inset 0 0 0 .8px rgba(255,255,255,.07)"></i>
<i style="left:454.3px;top:591.8px;width:14.8px;height:13px;background:#c6beb8"></i>
<i style="left:470.2px;top:577.8px;width:14.8px;height:13.2px;background:#ea33f7;box-shadow:inset 0 0 0 .8px rgba(255,255,255,.07)"></i>
<i style="left:470.2px;top:591.8px;width:14.8px;height:13px;background:#e2dedb"></i>
<i style="left:486.2px;top:577.8px;width:14.8px;height:13.2px;background:#270301;box-shadow:inset 0 0 0 .8px rgba(255,255,255,.07)"></i>
<i style="left:486.2px;top:591.8px;width:14.8px;height:13px;background:#2a2205"></i>
<i style="left:502.1px;top:577.8px;width:14.8px;height:13.2px;background:#4d0a05;box-shadow:inset 0 0 0 .8px rgba(255,255,255,.07)"></i>
<i style="left:502.1px;top:591.8px;width:14.8px;height:13px;background:#524511"></i>
<i style="left:518.0px;top:577.8px;width:14.8px;height:13.2px;background:#75140c;box-shadow:inset 0 0 0 .8px rgba(255,255,255,.07)"></i>
<i style="left:518.0px;top:591.8px;width:14.8px;height:13px;background:#7c671e"></i>
<i style="left:533.9px;top:577.8px;width:14.8px;height:13.2px;background:#9c1f14;box-shadow:inset 0 0 0 .8px rgba(255,255,255,.07)"></i>
<i style="left:533.9px;top:591.8px;width:14.8px;height:13px;background:#a5892c"></i>
<i style="left:549.8px;top:577.8px;width:14.8px;height:13.2px;background:#c2291b;box-shadow:inset 0 0 0 .8px rgba(255,255,255,.07)"></i>
<i style="left:549.8px;top:591.8px;width:14.8px;height:13px;background:#cdac39"></i>
<i style="left:565.7px;top:577.8px;width:14.8px;height:13.2px;background:#ea3323;box-shadow:inset 0 0 0 .8px rgba(255,255,255,.07)"></i>
<i style="left:565.7px;top:591.8px;width:14.8px;height:13px;background:#f7ce46"></i>
<i style="left:581.6px;top:577.8px;width:14.8px;height:13.2px;background:#ea4338;box-shadow:inset 0 0 0 .8px rgba(255,255,255,.07)"></i>
<i style="left:581.6px;top:591.8px;width:14.8px;height:13px;background:#f8d653"></i>
<i style="left:597.5px;top:577.8px;width:14.8px;height:13.2px;background:#ec625c;box-shadow:inset 0 0 0 .8px rgba(255,255,255,.07)"></i>
<i style="left:597.5px;top:591.8px;width:14.8px;height:13px;background:#f9de6d"></i>
<i style="left:613.4px;top:577.8px;width:14.8px;height:13.2px;background:#ef8784;box-shadow:inset 0 0 0 .8px rgba(255,255,255,.07)"></i>
<i style="left:613.4px;top:591.8px;width:14.8px;height:13px;background:#fbe78e"></i>
<i style="left:629.4px;top:577.8px;width:14.8px;height:13.2px;background:#f3aeac;box-shadow:inset 0 0 0 .8px rgba(255,255,255,.07)"></i>
<i style="left:629.4px;top:591.8px;width:14.8px;height:13px;background:#fcefb2"></i>
<i style="left:645.3px;top:577.8px;width:14.8px;height:13.2px;background:#f8d7d6;box-shadow:inset 0 0 0 .8px rgba(255,255,255,.07)"></i>
<i style="left:645.3px;top:591.8px;width:14.8px;height:13px;background:#fdf6d8"></i>
<i style="left:661.2px;top:577.8px;width:14.8px;height:13.2px;background:#240d0c;box-shadow:inset 0 0 0 .8px rgba(255,255,255,.07)"></i>
<i style="left:661.2px;top:591.8px;width:14.8px;height:13px;background:#27220e"></i>
<i style="left:677.1px;top:577.8px;width:14.8px;height:13.2px;background:#491a18;box-shadow:inset 0 0 0 .8px rgba(255,255,255,.07)"></i>
<i style="left:677.1px;top:591.8px;width:14.8px;height:13px;background:#4e441e"></i>
<i style="left:693.0px;top:577.8px;width:14.8px;height:13.2px;background:#6e2825;box-shadow:inset 0 0 0 .8px rgba(255,255,255,.07)"></i>
<i style="left:693.0px;top:591.8px;width:14.8px;height:13px;background:#75682e"></i>
<i style="left:708.9px;top:577.8px;width:14.8px;height:13.2px;background:#933531;box-shadow:inset 0 0 0 .8px rgba(255,255,255,.07)"></i>
<i style="left:708.9px;top:591.8px;width:14.8px;height:13px;background:#9c8a3d"></i>
<i style="left:724.8px;top:577.8px;width:14.8px;height:13.2px;background:#b8433d;box-shadow:inset 0 0 0 .8px rgba(255,255,255,.07)"></i>
<i style="left:724.8px;top:591.8px;width:14.8px;height:13px;background:#c3ac4d"></i>
<i style="left:740.7px;top:577.8px;width:14.8px;height:13.2px;background:#c56663;box-shadow:inset 0 0 0 .8px rgba(255,255,255,.07)"></i>
<i style="left:740.7px;top:591.8px;width:14.8px;height:13px;background:#cfbd6d"></i>
<i style="left:756.6px;top:577.8px;width:14.8px;height:13.2px;background:#d28b89;box-shadow:inset 0 0 0 .8px rgba(255,255,255,.07)"></i>
<i style="left:756.6px;top:591.8px;width:14.8px;height:13px;background:#dbce90"></i>
<i style="left:772.5px;top:577.8px;width:14.8px;height:13.2px;background:#e0b1b0;box-shadow:inset 0 0 0 .8px rgba(255,255,255,.07)"></i>
<i style="left:772.5px;top:591.8px;width:14.8px;height:13px;background:#e7ddb4"></i>
<i style="left:788.5px;top:577.8px;width:14.8px;height:13.2px;background:#efd8d8;box-shadow:inset 0 0 0 .8px rgba(255,255,255,.07)"></i>
<i style="left:788.5px;top:591.8px;width:14.8px;height:13px;background:#f3eed9"></i>
<i style="left:804.4px;top:577.8px;width:14.8px;height:13.2px;background:#231c1c;box-shadow:inset 0 0 0 .8px rgba(255,255,255,.07)"></i>
<i style="left:804.4px;top:591.8px;width:14.8px;height:13px;background:#24221d"></i>
<i style="left:820.1px;top:577.8px;width:14.7px;height:13.2px;background:#453837;box-shadow:inset 0 0 0 .8px rgba(255,255,255,.07)"></i>
<i style="left:820.1px;top:591.8px;width:14.7px;height:13px;background:#474538"></i>
<i style="left:835.9px;top:577.8px;width:14.2px;height:13.2px;background:#685453;box-shadow:inset 0 0 0 .8px rgba(255,255,255,.07)"></i>
<i style="left:835.9px;top:591.8px;width:14.2px;height:13px;background:#6b6755"></i>
<i style="left:851.1px;top:577.8px;width:14.2px;height:13.2px;background:#8c7070;box-shadow:inset 0 0 0 .8px rgba(255,255,255,.07)"></i>
<i style="left:851.1px;top:591.8px;width:14.2px;height:13px;background:#908a72"></i>
<i style="left:866.4px;top:577.8px;width:14.2px;height:13.2px;background:#a89493;box-shadow:inset 0 0 0 .8px rgba(255,255,255,.07)"></i>
<i style="left:866.4px;top:591.8px;width:14.2px;height:13px;background:#aba795"></i>
<i style="left:881.6px;top:577.8px;width:14.2px;height:13.2px;background:#c5b8b7;box-shadow:inset 0 0 0 .8px rgba(255,255,255,.07)"></i>
<i style="left:881.6px;top:591.8px;width:14.2px;height:13px;background:#c7c4b8"></i>
<i style="left:896.9px;top:577.8px;width:14.2px;height:13.2px;background:#e2dbdb;box-shadow:inset 0 0 0 .8px rgba(255,255,255,.07)"></i>
<i style="left:896.9px;top:591.8px;width:14.2px;height:13px;background:#e3e2dc"></i>
<i style="left:912.1px;top:577.8px;width:14.2px;height:13.2px;background:#281203;box-shadow:inset 0 0 0 .8px rgba(255,255,255,.07)"></i>
<i style="left:912.1px;top:591.8px;width:14.2px;height:13px;background:#242b07"></i>
</div>

<!-- status bar -->
<div style="left:44px;top:605.5px;width:936px;height:28px;background:#333"></div>
<div class="t" style="left:30px;width:56.5px;text-align:right;top:607.3px;font-size:9.4px;line-height:12px;letter-spacing:.13px">Fond :</div>
<div class="t" style="left:30px;width:56.5px;text-align:right;top:621px;font-size:9.4px;line-height:12px;letter-spacing:.27px">Contour :</div>
<div class="t" style="left:114.8px;top:607.3px;font-size:9.4px;line-height:12px">N/A</div>
<div class="t" style="left:114.8px;top:621px;font-size:9.4px;line-height:12px">N/A</div>
<div class="t" style="left:180.6px;top:613.6px;font-size:9.2px;line-height:12px">O :</div>
<div class="inp" style="left:196.8px;top:606.4px;width:56.8px;height:25.8px"><u style="left:28.6px"></u><u style="left:42.3px"></u></div>
<div class="val" style="left:202.8px;top:613.5px;letter-spacing:.33px">100</div>
<div class="hl" style="left:229px;top:618.9px;width:8.4px"></div>
<div class="hl" style="left:242.2px;top:618.9px;width:8.8px"></div><div class="vl" style="left:246.1px;top:614.8px;height:9.2px"></div>
<div style="left:262.3px;top:613.3px;width:2.7px;height:12.2px;background:#4a7fe6"></div>
<div class="t" style="left:269.6px;top:613.9px;font-size:9.75px;line-height:12px">Calque 1</div>
<!-- eye -->
<svg class="abs" style="left:325px;top:612px" width="15" height="14" viewBox="325 612 15 14"><path d="M326.6 620 C328.6 615.6 335.8 615.6 337.8 620 C335.8 624.4 328.6 624.4 326.6 620Z" fill="none" stroke="#f0f0f0" stroke-width="1.4"/><circle cx="332.2" cy="620" r="2" fill="#f0f0f0"/><path d="M332.2 613.2 V615.4 M328.3 614.2 L329.4 616.2 M336.1 614.2 L335 616.2" stroke="#f0f0f0" stroke-width="1.1"/></svg>
<!-- lock open -->
<svg class="abs" style="left:355.5px;top:612px" width="13" height="14" viewBox="0 0 13 14"><rect x="1" y="6.6" width="8" height="6.4" fill="#f0f0f0"/><path d="M6.2 6.8 V4.4 A2.3 2.3 0 0 1 10.8 4.4 V5.6" fill="none" stroke="#f0f0f0" stroke-width="1.4"/></svg>
<div class="t" style="left:382.2px;top:610.1px;font-size:9.8px;line-height:9.8px;letter-spacing:.09px;color:#e8e8e8"><b>Ctrl</b>: Sélectionner dans les groupes, Contraindre le déplacement à un<br>axe; <b>Shift</b>: Ajouter à la sélection</div>
<div class="t" style="left:717.3px;top:606.4px;font-size:9.4px;line-height:12px;letter-spacing:.5px">X :</div>
<div class="t" style="left:717.3px;top:618.4px;font-size:9.4px;line-height:12px;letter-spacing:.5px">Y :</div>
<div class="t" style="left:739.8px;top:606.4px;font-size:9.4px;line-height:12px;letter-spacing:.75px">232,23</div>
<div class="t" style="left:739.8px;top:618.4px;font-size:9.4px;line-height:12px;letter-spacing:.75px">211,46</div>
<div class="t" style="left:784.3px;top:613.8px;font-size:9.4px;line-height:12px;letter-spacing:.5px">Z :</div>
<div class="inp" style="left:799.6px;top:606.2px;width:70.8px;height:26.4px"><u style="left:43.6px"></u><u style="left:57.4px"></u></div>
<div class="t" style="left:810px;top:613.7px;font-size:9.7px;line-height:12px;color:#ededed;letter-spacing:.3px">71%</div>
<div class="hlw" style="left:845.3px;top:619px;width:8.8px"></div>
<div class="hlw" style="left:858.9px;top:619px;width:9px"></div><div class="vlw" style="left:862.7px;top:615.1px;height:9.2px"></div>
<div class="t" style="left:879px;top:613.8px;font-size:9.4px;line-height:12px;letter-spacing:.5px">R :</div>
<div class="inp" style="left:894px;top:606.2px;width:77.5px;height:26.4px"><u style="left:49.4px"></u><u style="left:63.3px"></u></div>
<div class="t" style="left:906.5px;top:613.7px;font-size:9.7px;line-height:12px;color:#ededed;letter-spacing:.64px">0,00°</div>
<div class="hlw" style="left:946.1px;top:619px;width:8.8px"></div>
<div class="hlw" style="left:959.3px;top:619px;width:9px"></div><div class="vlw" style="left:963.1px;top:615.1px;height:9.2px"></div>
<!-- palette controls -->
<svg class="abs" style="left:929.5px;top:587px" width="12" height="9" viewBox="0 0 12 9"><path d="M1.6 6.8 L6 2.4 L10.4 6.8" fill="none" stroke="#6a6a6a" stroke-width="1.3"/></svg>
<svg class="abs" style="left:947.3px;top:586.3px" width="12" height="9" viewBox="0 0 12 9"><path d="M1.6 2.2 L6 6.6 L10.4 2.2" fill="none" stroke="#f4f4f4" stroke-width="1.5"/></svg>
<svg class="abs" style="left:965px;top:589.5px" width="11" height="10" viewBox="0 0 11 10"><path d="M0.4 1.2 H10.6 M0.4 5 H10.6 M0.4 8.8 H10.6" stroke="#f0f0f0" stroke-width="1.4"/></svg>


</div></div>
</body>
</html>
